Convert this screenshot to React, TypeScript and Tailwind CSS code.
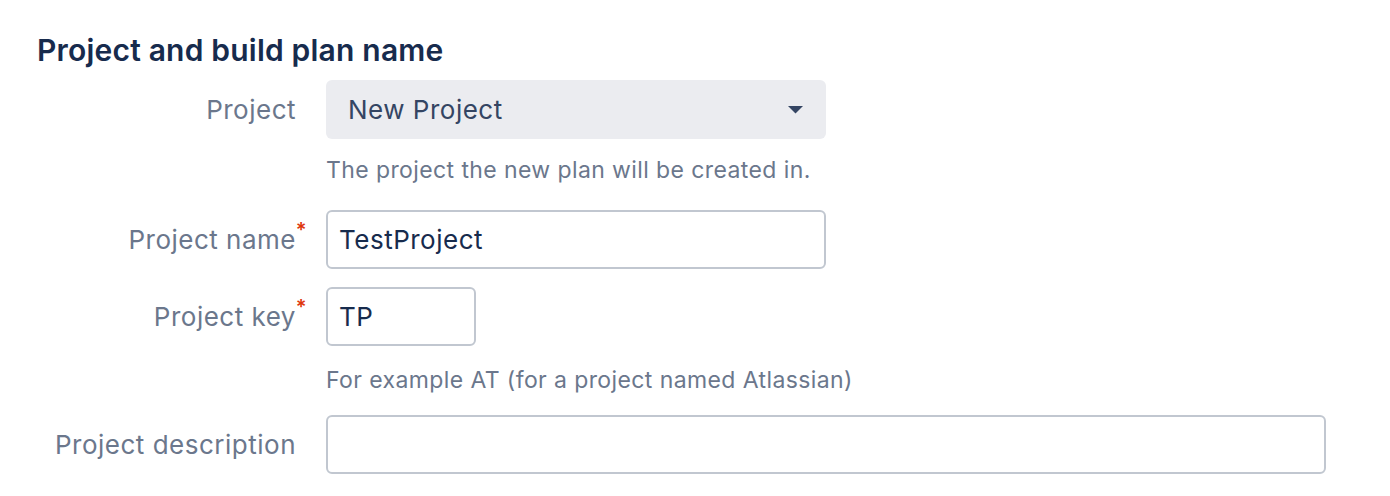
export default function App() {
	return (
		<div className="h-[496px] w-[1390px] bg-white font-['Inter','Noto_Sans',sans-serif]">
			<div className="pl-[37px] pt-[30px]">
				<h2 className="m-0 text-[30px] font-semibold leading-[40px] tracking-[0.2px] text-[#172B4D]">
					Project and build plan name
				</h2>
			</div>

			<div className="mt-[10px] grid grid-cols-[296px_1000px] gap-x-[30px]">
				{/* Project select */}
				<Label text="Project" className="h-[59px]" />
				<div>
					<button
						type="button"
						className="flex h-[59px] w-[500px] items-center justify-between rounded-[6px] bg-[#EBECF0] pl-[22px] pr-[22px] text-[26px] tracking-[0.5px] text-[#344563]"
					>
						<span>New Project</span>
						<svg width="15" height="8" viewBox="0 0 15 8" className="mr-[1px]">
							<path d="M0 0h15L7.5 7.5z" fill="#344563" />
						</svg>
					</button>
					<p className="mb-0 mt-[19px] h-[24px] text-[23px] leading-[24px] tracking-[0.4px] text-[#6B778C]">
						The project the new plan will be created in.
					</p>
				</div>

				{/* Project name */}
				<Label text="Project name" required className="mt-[28px] h-[59px]" />
				<div className="mt-[28px]">
					<input
						readOnly
						value="TestProject"
						className="h-[59px] w-[500px] rounded-[6px] border-2 border-[#C1C7D0] bg-white px-[11px] text-[26px] tracking-[0.5px] text-[#172B4D] outline-none"
					/>
				</div>

				{/* Project key */}
				<Label text="Project key" required className="mt-[18px] h-[59px]" />
				<div className="mt-[18px]">
					<input
						readOnly
						value="TP"
						className="h-[59px] w-[150px] rounded-[6px] border-2 border-[#C1C7D0] bg-white px-[11px] text-[26px] tracking-[0.5px] text-[#172B4D] outline-none"
					/>
					<p className="mb-0 mt-[22px] h-[24px] text-[23px] leading-[24px] tracking-[0.4px] text-[#6B778C]">
						For example AT (for a project named Atlassian)
					</p>
				</div>

				{/* Project description */}
				<Label text="Project description" className="mt-[23px] h-[59px]" />
				<div className="mt-[23px]">
					<input
						readOnly
						value=""
						className="h-[59px] w-[1000px] rounded-[6px] border-2 border-[#C1C7D0] bg-white px-[11px] text-[26px] text-[#172B4D] outline-none"
					/>
				</div>
			</div>
		</div>
	);
}

function Label({
	text,
	required,
	className = "",
}: {
	text: string;
	required?: boolean;
	className?: string;
}) {
	return (
		<label
			className={`flex items-center justify-end text-[26px] tracking-[0.5px] text-[#6B778C] ${className}`}
		>
			<span className="relative">
				{text}
				{required && (
					<span className="absolute -right-[11px] top-[0px] text-[20px] font-semibold leading-none text-[#DE350B]">
						*
					</span>
				)}
			</span>
		</label>
	);
}
